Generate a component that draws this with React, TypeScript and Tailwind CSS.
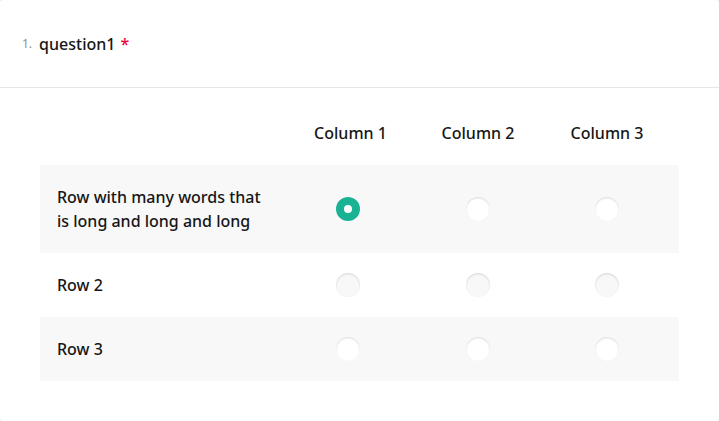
import React from 'react';

const columns = ['Column 1', 'Column 2', 'Column 3'];
const rows = [
  { label: 'Row with many words that is long and long and long', shaded: true, checked: 0 },
  { label: 'Row 2', shaded: false, checked: -1 },
  { label: 'Row 3', shaded: true, checked: -1 },
];

function Radio({ checked, onShaded }: { checked: boolean; onShaded: boolean }) {
  if (checked) {
    return (
      <span className="w-6 h-6 rounded-full bg-[#19b394] flex items-center justify-center">
        <span className="w-2 h-2 rounded-full bg-white"></span>
      </span>
    );
  }
  return (
    <span
      className={`w-6 h-6 rounded-full shadow-[inset_0_1px_2px_rgba(0,0,0,0.15)] ${
        onShaded ? 'bg-white' : 'bg-[#f8f8f8]'
      }`}
    ></span>
  );
}

export default function App() {
  return (
    <div className="w-[719px] h-[421px] bg-[#ececec]" style={{ fontFamily: '"Noto Sans", sans-serif' }}>
      <div className="h-[421px] bg-white rounded-[3px] text-[#161616]">
        {/* Question header */}
        <div className="h-[88px] border-b border-[#e6e6e6] pl-[22px] flex items-center">
          <span className="text-[12px] text-[#909090] mr-[7px] mt-[1px]">1.</span>
          <span className="text-[16px] font-medium">question1</span>
          <span className="text-[16px] font-medium text-[#e60a3e] ml-[5px]">*</span>
        </div>

        {/* Matrix */}
        <div className="pt-[33px] px-10">
          <div className="grid grid-cols-[242px_132px_128px_130px_1fr]">
            <div></div>
            {columns.map((c, j) => (
              <div
                key={c}
                className={`text-center text-[16px] leading-6 font-medium pb-5 ${j === 0 ? 'pl-[5px]' : ''}`}
              >
                {c}
              </div>
            ))}
            <div></div>
          </div>
          {rows.map((r, i) => (
            <div
              key={i}
              className={`grid grid-cols-[242px_132px_128px_130px_1fr] items-center py-5 ${
                r.shaded ? 'bg-[#f8f8f8]' : 'bg-white'
              }`}
            >
              <div className="pl-[17px] pr-4 text-[16px] leading-6 font-medium">{r.label}</div>
              {columns.map((c, j) => (
                <div key={c} className="flex justify-center">
                  <Radio checked={r.checked === j} onShaded={r.shaded} />
                </div>
              ))}
              <div></div>
            </div>
          ))}
        </div>
      </div>
    </div>
  );
}
